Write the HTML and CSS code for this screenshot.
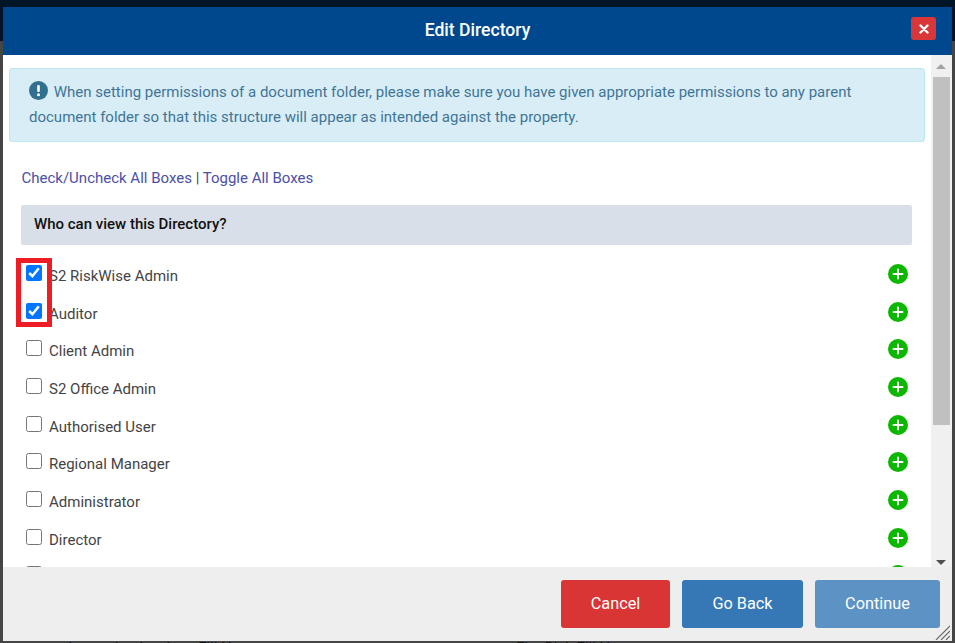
FILE: index.html
```html
<!DOCTYPE html>
<html lang="en">
<head>
<meta charset="utf-8">
<title>Edit Directory</title>
<link rel="stylesheet" href="styles.css">
</head>
<body>
<div class="backdrop">
  <div class="page-top"></div>
  <div class="page-peek"><span class="peek-a">Immunisation Area Fill Hearts</span><span class="peek-b">Fire Risk Fill Hearts</span></div>
</div>
<section class="modal">
  <header class="modal-head">
    <h1 class="modal-title">Edit Directory</h1>
    <button class="close-btn" aria-label="Close">
      <svg width="10" height="10" viewBox="0 0 10 10"><path d="M1.5 1.5l7 7M8.5 1.5l-7 7" stroke="#fff" stroke-width="2.4" stroke-linecap="round"/></svg>
    </button>
  </header>
  <div class="modal-middle">
    <div class="modal-scroll">
      <div class="alert">
        <svg class="alert-icon" width="19" height="19" viewBox="0 0 19 19"><circle cx="9.5" cy="9.5" r="9.5" fill="#31708f"/><rect x="8.2" y="4" width="2.6" height="7" rx="1" fill="#fff"/><circle cx="9.5" cy="13.7" r="1.5" fill="#fff"/></svg>
        When setting permissions of a document folder, please make sure you have given appropriate permissions to any parent document folder so that this structure will appear as intended against the property.
      </div>
      <div class="form">
        <p class="links"><a href="#">Check/Uncheck All Boxes</a> | <a href="#">Toggle All Boxes</a></p>
        <div class="section-bar">Who can view this Directory?</div>
        <ul class="perm-list">
          <li class="perm"><input type="checkbox" class="perm-check" checked><span class="perm-label">S2 RiskWise Admin</span><svg class="plus" viewBox="0 0 20 20"><circle cx="10" cy="10" r="10" fill="#0cb700"/><path d="M10 5.5v9M5.5 10h9" stroke="#fff" stroke-width="2" stroke-linecap="round"/></svg></li>
          <li class="perm"><input type="checkbox" class="perm-check" checked><span class="perm-label">Auditor</span><svg class="plus" viewBox="0 0 20 20"><circle cx="10" cy="10" r="10" fill="#0cb700"/><path d="M10 5.5v9M5.5 10h9" stroke="#fff" stroke-width="2" stroke-linecap="round"/></svg></li>
          <li class="perm"><input type="checkbox" class="perm-check"><span class="perm-label">Client Admin</span><svg class="plus" viewBox="0 0 20 20"><circle cx="10" cy="10" r="10" fill="#0cb700"/><path d="M10 5.5v9M5.5 10h9" stroke="#fff" stroke-width="2" stroke-linecap="round"/></svg></li>
          <li class="perm"><input type="checkbox" class="perm-check"><span class="perm-label">S2 Office Admin</span><svg class="plus" viewBox="0 0 20 20"><circle cx="10" cy="10" r="10" fill="#0cb700"/><path d="M10 5.5v9M5.5 10h9" stroke="#fff" stroke-width="2" stroke-linecap="round"/></svg></li>
          <li class="perm"><input type="checkbox" class="perm-check"><span class="perm-label">Authorised User</span><svg class="plus" viewBox="0 0 20 20"><circle cx="10" cy="10" r="10" fill="#0cb700"/><path d="M10 5.5v9M5.5 10h9" stroke="#fff" stroke-width="2" stroke-linecap="round"/></svg></li>
          <li class="perm"><input type="checkbox" class="perm-check"><span class="perm-label">Regional Manager</span><svg class="plus" viewBox="0 0 20 20"><circle cx="10" cy="10" r="10" fill="#0cb700"/><path d="M10 5.5v9M5.5 10h9" stroke="#fff" stroke-width="2" stroke-linecap="round"/></svg></li>
          <li class="perm"><input type="checkbox" class="perm-check"><span class="perm-label">Administrator</span><svg class="plus" viewBox="0 0 20 20"><circle cx="10" cy="10" r="10" fill="#0cb700"/><path d="M10 5.5v9M5.5 10h9" stroke="#fff" stroke-width="2" stroke-linecap="round"/></svg></li>
          <li class="perm"><input type="checkbox" class="perm-check"><span class="perm-label">Director</span><svg class="plus" viewBox="0 0 20 20"><circle cx="10" cy="10" r="10" fill="#0cb700"/><path d="M10 5.5v9M5.5 10h9" stroke="#fff" stroke-width="2" stroke-linecap="round"/></svg></li>
          <li class="perm"><input type="checkbox" class="perm-check"><span class="perm-label"></span><svg class="plus" viewBox="0 0 20 20"><circle cx="10" cy="10" r="10" fill="#0cb700"/><path d="M10 5.5v9M5.5 10h9" stroke="#fff" stroke-width="2" stroke-linecap="round"/></svg></li>
        </ul>
      </div>
      <div class="annotation"></div>
    </div>
    <div class="scrollbar">
      <div class="arrow-up"></div>
      <div class="thumb"></div>
      <div class="arrow-down"></div>
    </div>
  </div>
  <footer class="modal-foot">
    <button class="btn btn-cancel">Cancel</button>
    <button class="btn btn-back">Go Back</button>
    <button class="btn btn-continue">Continue</button>
    <svg class="grip" width="15" height="15" viewBox="0 0 15 15"><path d="M1 15L15 1M6 15L15 6M11 15l4-4" stroke="#666" stroke-width="1.1"/></svg>
  </footer>
</section>
</body>
</html>
```
FILE: styles.css
```css
html, body {
  margin: 0;
  height: 643px;
  overflow: hidden;
}
body {
  background: #454545;
  font-family: Roboto, "Liberation Sans", sans-serif;
  font-size: 15px;
  color: #444;
}
.backdrop {
  height: 643px;
  display: flex;
  flex-direction: column;
  justify-content: space-between;
}
.page-top {
  height: 41px;
  background: #001528;
}
.page-peek {
  height: 2px;
  overflow: hidden;
  position: relative;
  font-size: 15px;
  line-height: 17px;
  color: #111;
  display: flex;
  padding-left: 68px;
  gap: 250px;
}
.peek-a, .peek-b {
  margin-top: -1px;
}
.modal {
  position: absolute;
  left: 3px;
  top: 7px;
  width: 949px;
  height: 634px;
  background: #fff;
  display: flex;
  flex-direction: column;
}
.modal-head {
  height: 48px;
  flex: none;
  box-sizing: border-box;
  padding-bottom: 3px;
  background: #00488e;
  display: flex;
  align-items: center;
  justify-content: center;
  position: relative;
}
.modal-title {
  margin: 0;
  font-size: 17.6px;
  font-weight: 500;
  color: #fff;
}
.close-btn {
  position: absolute;
  left: 908px;
  top: 10px;
  width: 25px;
  height: 23px;
  padding: 0;
  border: 0;
  border-radius: 3px;
  background: #d9363a;
  display: flex;
  align-items: center;
  justify-content: center;
}
.modal-middle {
  flex: 1;
  min-height: 0;
  display: flex;
}
.modal-scroll {
  flex: 1;
  min-width: 0;
  overflow: hidden;
  position: relative;
  padding-top: 13px;
}
.alert {
  margin: 0 6px;
  padding: 11px 19px 11px 19px;
  background: #d9edf6;
  border: 1px solid #bce8f1;
  border-radius: 3px;
  color: #3f7596;
  font-size: 15px;
  line-height: 25px;
}
.alert-icon {
  vertical-align: -3px;
  margin-right: 2px;
}
.form {
  padding: 0 19px 0 18px;
}
.links {
  margin: 27px 0 0 0.5px;
  font-size: 15px;
  line-height: 18px;
  color: #444;
}
.links a {
  color: #4b4fa6;
  text-decoration: none;
}
.section-bar {
  margin-top: 18px;
  height: 40px;
  box-sizing: border-box;
  padding: 0 0 2px 13px;
  display: flex;
  align-items: center;
  background: #d9dfe9;
  border-radius: 2px;
  color: #111;
  font-size: 15px;
  font-weight: 500;
}
.perm-list {
  list-style: none;
  margin: 12.26px 0 0;
  padding: 0;
}
.perm {
  height: 37.68px;
  display: flex;
  align-items: center;
}
.perm-check {
  width: 16px;
  height: 16px;
  margin: -6px 7px 0 5px;
  flex: none;
}
.perm-label {
  flex: 1;
  color: #444;
  font-size: 15px;
}
.plus {
  width: 20px;
  height: 20px;
  flex: none;
  margin: -4px 4.5px 0 0;
}
.annotation {
  position: absolute;
  left: 13px;
  top: 203px;
  width: 26px;
  height: 59px;
  border: 5px solid #ee1c25;
}
.scrollbar {
  width: 21px;
  flex: none;
  background: #f0f0f0;
  display: flex;
  flex-direction: column;
  align-items: center;
  position: relative;
}
.thumb {
  position: absolute;
  left: 2px;
  top: 22px;
  width: 17px;
  height: 348px;
  background: #c0c0c0;
}
.arrow-up {
  position: absolute;
  left: 5px;
  top: 9px;
  border: 5px solid transparent;
  border-top: 0;
  border-bottom: 5px solid #a3a3a3;
}
.arrow-down {
  position: absolute;
  left: 5px;
  bottom: 2px;
  border: 5px solid transparent;
  border-bottom: 0;
  border-top: 5px solid #505050;
}
.modal-foot {
  height: 74px;
  flex: none;
  background: #eee;
  display: flex;
  justify-content: flex-end;
  align-items: flex-start;
  gap: 12px;
  padding: 13px 12px 0 0;
  box-sizing: border-box;
  position: relative;
}
.btn {
  height: 48px;
  border: 0;
  border-radius: 3px;
  color: #fff;
  font-family: inherit;
  font-size: 16.3px;
  padding: 0 0 2px;
}
.btn-cancel { width: 109px; background: #d93535; }
.btn-back { width: 121px; background: #3578b5; }
.btn-continue { width: 125px; background: #5d92c4; }
.grip {
  position: absolute;
  right: 2px;
  bottom: 1px;
}
```
